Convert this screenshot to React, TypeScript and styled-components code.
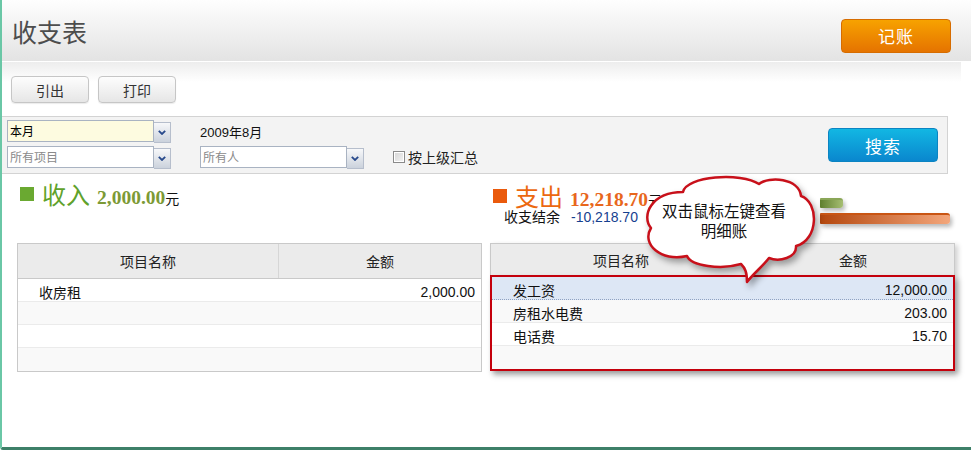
import styled, { createGlobalStyle } from "styled-components";

const GlobalStyle = createGlobalStyle`
  * { box-sizing: border-box; }
  body {
    margin: 0;
    background: #fff;
    font-family: "Liberation Sans", "Noto Sans CJK SC", sans-serif;
    color: #111;
  }
`;

const cjk = `"Noto Sans CJK SC", "Liberation Sans", sans-serif`;
const serif = `"Liberation Serif", "Noto Sans CJK SC", serif`;

const Page = styled.div`
  position: relative;
  width: 971px;
  height: 450px;
  border-left: 2px solid #6ac7a6;
  border-bottom: 3px solid #3d8068;
  border-bottom-left-radius: 3px;
  overflow: hidden;
  background: #fff;
`;

const Header = styled.header`
  height: 61px;
  display: flex;
  align-items: center;
  justify-content: space-between;
  padding: 0 20px 0 10px;
  background: linear-gradient(#fefefe, #e3e3e3);
`;

const Title = styled.h1`
  margin: 0;
  font: 400 25px/30px ${cjk};
  color: #4d4d4d;
`;

const tones = {
  orange: { top: "#f7a200", bottom: "#e57300", border: "#d66c00" },
  blue: { top: "#12b7e3", bottom: "#0a87ce", border: "#0b84c2" },
};

const ActionButton = styled.button<{ $tone: keyof typeof tones; $shift?: number }>`
  width: 110px;
  height: 34px;
  margin-top: ${(p) => p.$shift ?? 0}px;
  padding: 0;
  border: 1px solid ${(p) => tones[p.$tone].border};
  border-radius: 4px;
  background: linear-gradient(${(p) => tones[p.$tone].top}, ${(p) => tones[p.$tone].bottom});
  color: #fff;
  font: 17px/1 ${cjk};
  letter-spacing: 1px;
`;

const Toolbar = styled.div`
  height: 55px;
  margin-right: 10px;
  border-top: 1px solid #fff;
  background: linear-gradient(#ededed, #fff 20px);
  display: flex;
  gap: 9px;
  padding: 14px 0 0 9px;
`;

const PlainButton = styled.button`
  width: 78px;
  height: 27px;
  padding: 0;
  border: 1px solid #c6c6c6;
  border-radius: 4px;
  background: linear-gradient(#fdfdfd, #e6e6e6);
  box-shadow: 0 1px 1px rgba(0, 0, 0, 0.08);
  color: #333;
  font: 14px/1 ${cjk};
`;

const FilterPanel = styled.div`
  height: 58px;
  margin-right: 23px;
  border: 1px solid #d3d3d3;
  border-left: none;
  background: #f3f3f3;
  display: flex;
  align-items: center;
  padding-left: 5px;
`;

const FilterGrid = styled.div`
  align-self: flex-start;
  margin-top: 3px;
  display: grid;
  grid-template-columns: 164px 164px auto;
  grid-template-rows: 22px 22px;
  grid-template-areas:
    "period label ."
    "project person check";
  column-gap: 29px;
  row-gap: 4px;
`;

const Select = styled.div<{ $area: string }>`
  grid-area: ${(p) => p.$area};
  display: flex;
  width: 164px;
  height: 22px;
`;

const SelectField = styled.div<{ $filled?: boolean; $placeholder?: boolean }>`
  flex: 1;
  border: 1px solid #a9b3c2;
  background: ${(p) => (p.$filled ? "#fdfbe0" : "#fff")};
  padding-left: 2px;
  font: 12px/20px ${cjk};
  color: ${(p) => (p.$placeholder ? "#8a8a8a" : "#000")};
`;

const SelectArrow = styled.span`
  width: 17px;
  height: 21px;
  margin-top: 2px;
  border: 1px solid #b6becc;
  border-left: none;
  background: linear-gradient(#f7f8fa, #cbd2dc);
  display: flex;
  align-items: center;
  justify-content: center;
`;

const PeriodLabel = styled.span`
  grid-area: label;
  align-self: center;
  font-size: 13px;
  color: #111;
`;

const CheckLabel = styled.label`
  grid-area: check;
  display: flex;
  align-items: center;
  gap: 3px;
  font: 14px/1 ${cjk};
  color: #222;
`;

const CheckBox = styled.span`
  width: 12px;
  height: 12px;
  border: 1px solid #8a8a8a;
  background: linear-gradient(135deg, #d4d4d4, #f4f4f4);
  box-shadow: inset 0 0 0 1px #fff;
`;

const SearchButton = styled(ActionButton)`
  margin-left: auto;
  margin-right: 9px;
`;

const Content = styled.div`
  display: grid;
  grid-template-columns: 465px 465px;
  column-gap: 8px;
  padding-left: 15px;
`;

const Column = styled.section``;

const Summary = styled.div`
  height: 69px;
  display: flex;
`;

const SummaryInfo = styled.div<{ $top: number }>`
  padding-top: ${(p) => p.$top}px;
`;

const palettes = {
  income: { square: "#6aa931", label: "#5fa22b", amount: "#7c9a35" },
  expense: { square: "#ea5a0c", label: "#ec6810", amount: "#e8671c" },
};

const Heading = styled.div`
  display: flex;
  align-items: baseline;
  height: 28px;
  line-height: 28px;
  padding-left: 3px;
`;

const Square = styled.span<{ $kind: keyof typeof palettes }>`
  align-self: center;
  width: 14px;
  height: 14px;
  margin-right: 8px;
  background: ${(p) => palettes[p.$kind].square};
`;

const HeadingLabel = styled.span<{ $kind: keyof typeof palettes }>`
  font: 24px/28px ${cjk};
  color: ${(p) => palettes[p.$kind].label};
  margin-right: 7px;
`;

const HeadingAmount = styled.span<{ $kind: keyof typeof palettes }>`
  font: 700 19.5px/28px ${serif};
  color: ${(p) => palettes[p.$kind].amount};
`;

const Unit = styled.span`
  font: 14px/28px ${cjk};
  color: #111;
`;

const Balance = styled.div`
  padding-left: 14px;
  display: flex;
  gap: 11px;
  font-size: 14px;
  line-height: 14px;
`;

const BalanceValue = styled.span`
  color: #16408f;
`;

const Chart = styled.div`
  margin: 24px 3px 0 auto;
  width: 132px;
  display: flex;
  flex-direction: column;
  gap: 5px;
`;

const bars = {
  income: { from: "#5f7f2e", to: "#a6be72", top: "#8aa657", h: 10 },
  expense: { from: "#b4470d", to: "#f3a67b", top: "#c95513", h: 11 },
};

const Bar = styled.div<{ $kind: keyof typeof bars }>`
  height: ${(p) => bars[p.$kind].h}px;
  border-top: 2px solid ${(p) => bars[p.$kind].top};
  border-radius: 1px 3px 3px 1px;
  background: linear-gradient(to right, ${(p) => bars[p.$kind].from}, ${(p) => bars[p.$kind].to});
  box-shadow: 2px 3px 4px rgba(0, 0, 0, 0.28);
`;

const Table = styled.div<{ $highlight?: boolean }>`
  border: 1px solid #c9c9c9;
  border-bottom: ${(p) => (p.$highlight ? "none" : "1px solid #c9c9c9")};
  box-shadow: ${(p) => (p.$highlight ? "3px 2px 5px rgba(0,0,0,0.18)" : "none")};
`;

const HeadRow = styled.div<{ $h: number; $highlight?: boolean }>`
  display: grid;
  grid-template-columns: 260px 1fr;
  height: ${(p) => p.$h}px;
  background: #ebebeb;
  border-bottom: ${(p) => (p.$highlight ? "none" : "1px solid #c9c9c9")};
`;

const HeadCell = styled.div`
  display: flex;
  align-items: center;
  justify-content: center;
  font: 14px/1 ${cjk};
  color: #222;
  & + & {
    border-left: 1px solid #d6d6d6;
  }
`;

const Body = styled.div<{ $highlight?: boolean }>`
  ${(p) =>
    p.$highlight
      ? `
    margin: 0 -1px;
    border: 2px solid #c4000c;
    box-shadow: 3px 4px 6px rgba(0, 0, 0, 0.28);
  `
      : ""}
`;

const Row = styled.div<{ $alt?: boolean; $selected?: boolean }>`
  display: grid;
  grid-template-columns: 259px 1fr;
  height: 23px;
  padding-top: 3px;
  align-items: center;
  background: ${(p) => (p.$selected ? "#dde7f5" : p.$alt ? "#f9f9f9" : "#fff")};
  border-bottom: 1px ${(p) => (p.$selected ? "dotted #8fa2c2" : "solid #ebebeb")};
  font-size: 14px;
  &:last-child {
    border-bottom: none;
  }
`;

const NameCell = styled.span`
  padding-left: 21px;
  font-family: ${cjk};
`;

const AmountCell = styled.span`
  text-align: right;
  padding-right: 6px;
`;

const Callout = styled.div`
  position: absolute;
  left: 639px;
  top: 174px;
  width: 180px;
  height: 112px;
  pointer-events: none;
  svg {
    position: absolute;
    inset: 0;
    overflow: visible;
    filter: drop-shadow(3px 4px 3px rgba(0, 0, 0, 0.35));
  }
`;

const CalloutText = styled.div`
  position: absolute;
  left: 0;
  top: 26px;
  width: 166px;
  text-align: center;
  font: 15.5px/20px ${cjk};
  color: #111;
`;

interface IItem {
  name: string;
  amount: number;
}

const income: IItem[] = [{ name: "收房租", amount: 2000 }];
const expense: IItem[] = [
  { name: "发工资", amount: 12000 },
  { name: "房租水电费", amount: 203 },
  { name: "电话费", amount: 15.7 },
];

const money = (n: number) =>
  n.toLocaleString("en-US", { minimumFractionDigits: 2, maximumFractionDigits: 2 });

const total = (items: IItem[]) => items.reduce((s, i) => s + i.amount, 0);

function Arrow() {
  return (
    <svg width="8" height="5" viewBox="0 0 8 5">
      <polyline points="0.8,0.8 4,4 7.2,0.8" fill="none" stroke="#284a8c" strokeWidth="1.8" />
    </svg>
  );
}

function ItemTable({ items, highlight }: { items: IItem[]; highlight?: boolean }) {
  const rows: (IItem | null)[] = [...items];
  while (rows.length < 4) rows.push(null);
  return (
    <Table $highlight={highlight}>
      <HeadRow $h={highlight ? 31 : 35} $highlight={highlight}>
        <HeadCell>项目名称</HeadCell>
        <HeadCell>金额</HeadCell>
      </HeadRow>
      <Body $highlight={highlight}>
        {rows.map((r, i) => (
          <Row key={i} $alt={i % 2 === 1} $selected={highlight && i === 0}>
            <NameCell>{r?.name}</NameCell>
            <AmountCell>{r ? money(r.amount) : ""}</AmountCell>
          </Row>
        ))}
      </Body>
    </Table>
  );
}

export default function App() {
  const inTotal = total(income);
  const outTotal = total(expense);
  const max = Math.max(inTotal, outTotal);

  return (
    <Page>
      <GlobalStyle />
      <Header>
        <Title>收支表</Title>
        <ActionButton $tone="orange" $shift={10}>
          记账
        </ActionButton>
      </Header>

      <Toolbar>
        <PlainButton>引出</PlainButton>
        <PlainButton>打印</PlainButton>
      </Toolbar>

      <FilterPanel>
        <FilterGrid>
          <Select $area="period">
            <SelectField $filled>本月</SelectField>
            <SelectArrow>
              <Arrow />
            </SelectArrow>
          </Select>
          <PeriodLabel>2009年8月</PeriodLabel>
          <Select $area="project">
            <SelectField $placeholder>所有项目</SelectField>
            <SelectArrow>
              <Arrow />
            </SelectArrow>
          </Select>
          <Select $area="person">
            <SelectField $placeholder>所有人</SelectField>
            <SelectArrow>
              <Arrow />
            </SelectArrow>
          </Select>
          <CheckLabel>
            <CheckBox />
            按上级汇总
          </CheckLabel>
        </FilterGrid>
        <SearchButton $tone="blue">搜索</SearchButton>
      </FilterPanel>

      <Content>
        <Column>
          <Summary>
            <SummaryInfo $top={6}>
              <Heading>
                <Square $kind="income" />
                <HeadingLabel $kind="income">收入</HeadingLabel>
                <HeadingAmount $kind="income">{money(inTotal)}</HeadingAmount>
                <Unit>元</Unit>
              </Heading>
            </SummaryInfo>
          </Summary>
          <ItemTable items={income} />
        </Column>

        <Column>
          <Summary>
            <SummaryInfo $top={8}>
              <Heading>
                <Square $kind="expense" />
                <HeadingLabel $kind="expense">支出</HeadingLabel>
                <HeadingAmount $kind="expense">{money(outTotal)}</HeadingAmount>
                <Unit>元</Unit>
              </Heading>
              <Balance>
                <span>收支结余</span>
                <BalanceValue>{money(inTotal - outTotal)}</BalanceValue>
              </Balance>
            </SummaryInfo>
            <Chart>
              <Bar $kind="income" style={{ width: `${Math.round((inTotal / max) * 130) + 2}px` }} />
              <Bar $kind="expense" style={{ width: `${Math.round((outTotal / max) * 130)}px` }} />
            </Chart>
          </Summary>
          <ItemTable items={expense} highlight />
        </Column>
      </Content>

      <Callout>
        <svg width="180" height="112" viewBox="0 0 180 112">
          <path
            d="M 42 18
               C 45 2, 100 -2, 118 10
               C 128 2, 158 4, 160 22
               C 178 28, 178 66, 155 72
               C 156 84, 138 88, 128 84
               C 122 92, 112 100, 106 108
               C 106 98, 104 94, 100 90
               C 80 96, 50 92, 46 82
               C 20 88, 0 70, 10 54
               C 0 42, 10 18, 42 18 Z"
            fill="#fff"
            stroke="#c8101a"
            strokeWidth="2.5"
            strokeLinejoin="round"
          />
        </svg>
        <CalloutText>
          双击鼠标左键查看
          <br />
          明细账
        </CalloutText>
      </Callout>
    </Page>
  );
}
